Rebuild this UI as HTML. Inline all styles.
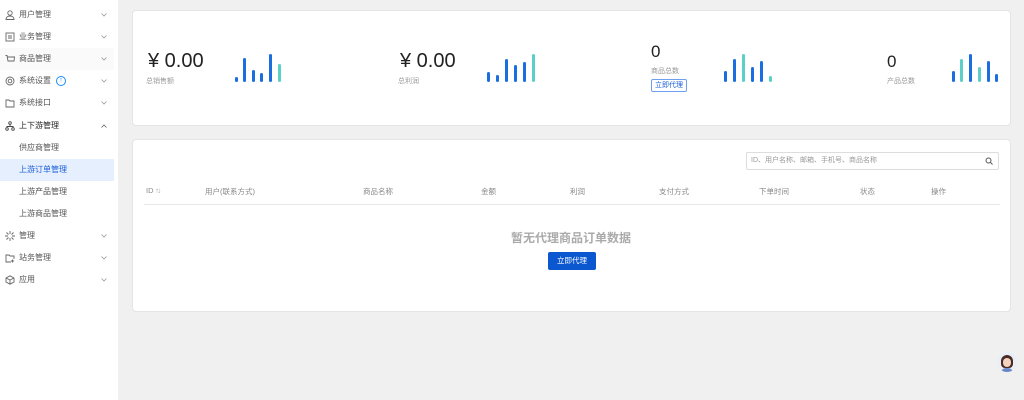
<!DOCTYPE html>
<html><head><meta charset="utf-8"><style>
*{margin:0;padding:0;box-sizing:border-box}
body{width:1024px;height:400px;background:#f0f0f0;font-family:"Liberation Sans","Noto Sans CJK SC",sans-serif;position:relative;overflow:hidden;color:#333}
.side{position:absolute;left:0;top:0;width:118px;height:400px;background:#fff}
.it{position:absolute;left:0;width:114px;height:22px;font-size:8px;color:#555;line-height:22px}
.it .ic{position:absolute;left:5px;top:6px;width:10px;height:10px}
.it .t{position:absolute;left:19px}
.it .ch{position:absolute;left:101px;top:9px;width:6px;height:4px}
.card{position:absolute;background:#fff;border-radius:4px;border:1px solid #e4e4e4}
.bar{position:absolute;width:3px;border-radius:2px;background:#1a6ee0}
.tl{background:#5bd0c8}
.big{position:absolute;font-size:20px;color:#222}
.lb{position:absolute;font-size:7px;color:#999}
.th{position:absolute;top:186px;font-size:7.5px;color:#888}
</style></head><body>
<svg width="0" height="0" style="position:absolute"><defs><symbol id="dn" viewBox="0 0 6 4"><path d="M.5.5L3 3 5.5.5" fill="none" stroke="#999" stroke-width=".8"/></symbol><symbol id="up" viewBox="0 0 6 4"><path d="M.5 3.5L3 1l2.5 2.5" fill="none" stroke="#666" stroke-width=".8"/></symbol></defs></svg>
<div class="side">
<div class="it" style="top:4px"><svg class="ic" viewBox="0 0 10 10" fill="none" stroke="#666" stroke-width=".9"><circle cx="5" cy="3" r="2.2"/><path d="M1 9.5c0-2.5 2-3.5 4-3.5s4 1 4 3.5z"/></svg><span class="t">用户管理</span><svg class="ch"><use href="#dn"/></svg></div>
<div class="it" style="top:26px"><svg class="ic" viewBox="0 0 10 10" fill="none" stroke="#666" stroke-width=".9"><rect x="1" y="1" width="8" height="8"/><path d="M3 4h4M3 6h4"/></svg><span class="t">业务管理</span><svg class="ch"><use href="#dn"/></svg></div>
<div class="it" style="top:48px;background:#fafafa"><svg class="ic" viewBox="0 0 10 10" fill="none" stroke="#666" stroke-width=".9"><path d="M0.5 1.5h1.5l1 5.5h6l.5-4H2.5"/></svg><span class="t">商品管理</span><svg class="ch"><use href="#dn"/></svg></div>
<div class="it" style="top:70px"><svg class="ic" viewBox="0 0 10 10" fill="none" stroke="#666" stroke-width=".9"><circle cx="5" cy="5" r="4"/><circle cx="5" cy="5" r="1.8"/></svg><span class="t">系统设置</span><span style="position:absolute;left:56px;top:6px;width:10px;height:10px;border:1px solid #1a8cff;border-radius:50%;color:#1a8cff;font-size:7px;line-height:8px;text-align:center">↑</span><svg class="ch"><use href="#dn"/></svg></div>
<div class="it" style="top:92px"><svg class="ic" viewBox="0 0 10 10" fill="none" stroke="#666" stroke-width=".9"><path d="M1 2h3l1 1h4v6H1z"/></svg><span class="t">系统接口</span><svg class="ch"><use href="#dn"/></svg></div>
<div class="it" style="top:115px;color:#222"><svg class="ic" viewBox="0 0 10 10" fill="none" stroke="#444" stroke-width=".9"><circle cx="5" cy="2" r="1.3"/><circle cx="2" cy="8" r="1.3"/><circle cx="8" cy="8" r="1.3"/><path d="M5 3.3v2M2 6.7V5.5h6v1.2"/></svg><span class="t">上下游管理</span><svg class="ch"><use href="#up"/></svg></div>
<div class="it" style="top:137px"><span class="t">供应商管理</span></div>
<div class="it" style="top:159px;background:#e6effd;color:#1a5fd6"><span class="t">上游订单管理</span></div>
<div class="it" style="top:181px"><span class="t">上游产品管理</span></div>
<div class="it" style="top:203px"><span class="t">上游商品管理</span></div>
<div class="it" style="top:225px"><svg class="ic" viewBox="0 0 10 10" fill="none" stroke="#666" stroke-width=".9"><path d="M5 0v3M5 7v3M0 5h3M7 5h3M1.5 1.5l2 2M6.5 6.5l2 2M8.5 1.5l-2 2M3.5 6.5l-2 2"/></svg><span class="t">管理</span><svg class="ch"><use href="#dn"/></svg></div>
<div class="it" style="top:247px"><svg class="ic" viewBox="0 0 10 10" fill="none" stroke="#666" stroke-width=".9"><path d="M6 9H1V2h3l1 1h4v3M7.5 6.5v3M6 8h3"/></svg><span class="t">站务管理</span><svg class="ch"><use href="#dn"/></svg></div>
<div class="it" style="top:269px"><svg class="ic" viewBox="0 0 10 10" fill="none" stroke="#666" stroke-width=".9"><path d="M5 .8L9 3v4L5 9.2 1 7V3zM1 3l4 2 4-2M5 5v4"/></svg><span class="t">应用</span><svg class="ch"><use href="#dn"/></svg></div>
</div>

<div class="card" style="left:132px;top:10px;width:879px;height:116px"></div>
<div class="big" style="left:148px;top:50px">¥ 0.00</div><div class="lb" style="left:146px;top:76px">总销售额</div>
<div class="big" style="left:400px;top:50px">¥ 0.00</div><div class="lb" style="left:398px;top:76px">总利润</div>
<div class="big" style="left:651px;top:42px;font-size:17px">0</div><div class="lb" style="left:651px;top:66px">商品总数</div>
<div style="position:absolute;left:651px;top:79px;width:36px;height:13px;border:1px solid #6d9ef0;border-radius:2px;font-size:7px;color:#1a5fd6;text-align:center;line-height:11px">立即代理</div>
<div class="big" style="left:887px;top:52px;font-size:17px">0</div><div class="lb" style="left:887px;top:76px">产品总数</div>

<div class="bar" style="left:235px;top:77px;height:5px"></div><div class="bar" style="left:243px;top:58px;height:24px"></div><div class="bar" style="left:252px;top:70px;height:12px"></div><div class="bar" style="left:260px;top:73px;height:9px"></div><div class="bar" style="left:269px;top:54px;height:28px"></div><div class="bar tl" style="left:278px;top:64px;height:18px"></div>
<div class="bar" style="left:487px;top:72px;height:10px"></div><div class="bar" style="left:496px;top:75px;height:7px"></div><div class="bar" style="left:505px;top:59px;height:23px"></div><div class="bar" style="left:514px;top:65px;height:17px"></div><div class="bar" style="left:523px;top:62px;height:20px"></div><div class="bar tl" style="left:532px;top:54px;height:28px"></div>
<div class="bar" style="left:724px;top:71px;height:11px"></div><div class="bar" style="left:733px;top:59px;height:23px"></div><div class="bar tl" style="left:742px;top:54px;height:28px"></div><div class="bar" style="left:751px;top:67px;height:15px"></div><div class="bar" style="left:760px;top:61px;height:21px"></div><div class="bar tl" style="left:769px;top:76px;height:6px"></div>
<div class="bar" style="left:952px;top:71px;height:11px"></div><div class="bar tl" style="left:960px;top:59px;height:23px"></div><div class="bar" style="left:969px;top:54px;height:28px"></div><div class="bar tl" style="left:978px;top:67px;height:15px"></div><div class="bar" style="left:987px;top:61px;height:21px"></div><div class="bar" style="left:995px;top:74px;height:8px"></div>

<div class="card" style="left:132px;top:139px;width:879px;height:173px"></div>
<div style="position:absolute;left:746px;top:152px;width:253px;height:18px;border:1px solid #ddd;border-radius:2px;font-size:7px;color:#999;line-height:16px;padding-left:4px">ID、用户名称、邮箱、手机号、商品名称<svg style="position:absolute;right:5px;top:4px" width="8" height="8" viewBox="0 0 8 8" fill="none" stroke="#555" stroke-width="1"><circle cx="3.5" cy="3.5" r="2.5"/><path d="M5.5 5.5l2 2"/></svg></div>
<div class="th" style="left:146px">ID <span style="font-size:5px;color:#aaa">⇅</span></div>
<div class="th" style="left:205px">用户(联系方式)</div>
<div class="th" style="left:363px">商品名称</div>
<div class="th" style="left:481px">金额</div>
<div class="th" style="left:570px">利润</div>
<div class="th" style="left:659px">支付方式</div>
<div class="th" style="left:759px">下单时间</div>
<div class="th" style="left:860px">状态</div>
<div class="th" style="left:931px">操作</div>
<div style="position:absolute;left:144px;top:204px;width:856px;height:1px;background:#e8e8e8"></div>
<div style="position:absolute;left:471px;top:229px;width:200px;text-align:center;font-size:12px;font-weight:bold;color:#aaa">暂无代理商品订单数据</div>
<div style="position:absolute;left:548px;top:252px;width:48px;height:18px;background:#0b57d0;border-radius:2px;color:#fff;font-size:7.5px;text-align:center;line-height:18px">立即代理</div>

<div style="position:absolute;left:997px;top:352px;width:20px;height:20px;border-radius:50%;background:#e9eef8;overflow:hidden">
<div style="position:absolute;left:4px;top:3px;width:12px;height:13px;border-radius:6px 6px 4px 4px;background:#4a2a22"></div>
<div style="position:absolute;left:6px;top:6px;width:8px;height:9px;border-radius:4px;background:#f3d2c2"></div>
<div style="position:absolute;left:4px;top:16px;width:12px;height:6px;border-radius:5px 5px 0 0;background:#6a88c8"></div></div>
</body></html>
